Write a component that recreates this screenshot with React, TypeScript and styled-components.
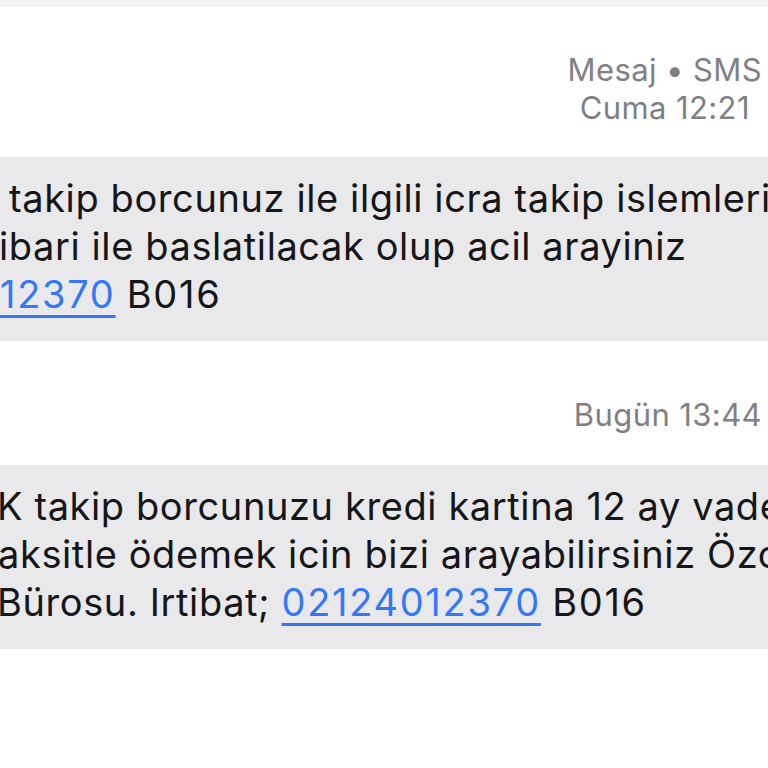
import React from "react";
import styled, { createGlobalStyle } from "styled-components";

const Global = createGlobalStyle`
  html, body { margin: 0; padding: 0; background: #ffffff; }
  body { font-family: Inter, "Noto Sans", "Liberation Sans", sans-serif; -webkit-font-smoothing: antialiased; }
`;

const Page = styled.div`
  width: 768px;
  height: 768px;
  overflow: hidden;
  background: #ffffff;
  display: flex;
  flex-direction: column;
`;

const TopBand = styled.div`
  height: 7px;
  background: #f3f3f3;
  flex-shrink: 0;
`;

const Stamp = styled.div<{ $top: number; $bottom: number }>`
  align-self: flex-end;
  margin: ${(p) => p.$top}px 6px ${(p) => p.$bottom}px 0;
  text-align: center;
  font-size: 31px;
  letter-spacing: 0.4px;
  line-height: 38px;
  color: #808084;
  white-space: nowrap;
`;

const Bubble = styled.div<{ $gap: number }>`
  margin-left: -40px;
  width: 900px;
  background: #e9e9eb;
  border-radius: 36px;
  padding: 17px 0 23px 40px;
  margin-bottom: ${(p) => p.$gap}px;
  flex-shrink: 0;
  font-size: 38px;
  letter-spacing: 0.6px;
  line-height: 48px;
  color: #161618;
`;

const Line = styled.div<{ $x: number }>`
  white-space: nowrap;
  margin-left: ${(p) => p.$x}px;
`;

const Num = styled.span`
  letter-spacing: 1.7px;
`;

const Phone = styled(Num)`
  color: #3478f6;
  text-decoration: underline;
  text-decoration-thickness: 2.5px;
  text-underline-offset: 7px;
`;

export default function App() {
  return (
    <>
      <Global />
      <Page>
        <TopBand />
        <Stamp $top={44} $bottom={30}>
          Mesaj • SMS
          <br />
          Cuma 12:21
        </Stamp>
        <Bubble $gap={55}>
          <Line $x={9}>takip borcunuz ile ilgili icra takip islemleri</Line>
          <Line $x={-1}>ibari ile baslatilacak olup acil arayiniz</Line>
          <Line $x={0}>
            <Phone>12370</Phone> <Num>B016</Num>
          </Line>
        </Bubble>
        <Stamp $top={0} $bottom={31}>
          Bugün 13:44
        </Stamp>
        <Bubble $gap={0}>
          <Line $x={-3}>K takip borcunuzu kredi kartina 12 ay vade</Line>
          <Line $x={-2}>aksitle ödemek icin bizi arayabilirsiniz Özo</Line>
          <Line $x={-3}>
            Bürosu. Irtibat; <Phone>02124012370</Phone> <Num>B016</Num>
          </Line>
        </Bubble>
      </Page>
    </>
  );
}
